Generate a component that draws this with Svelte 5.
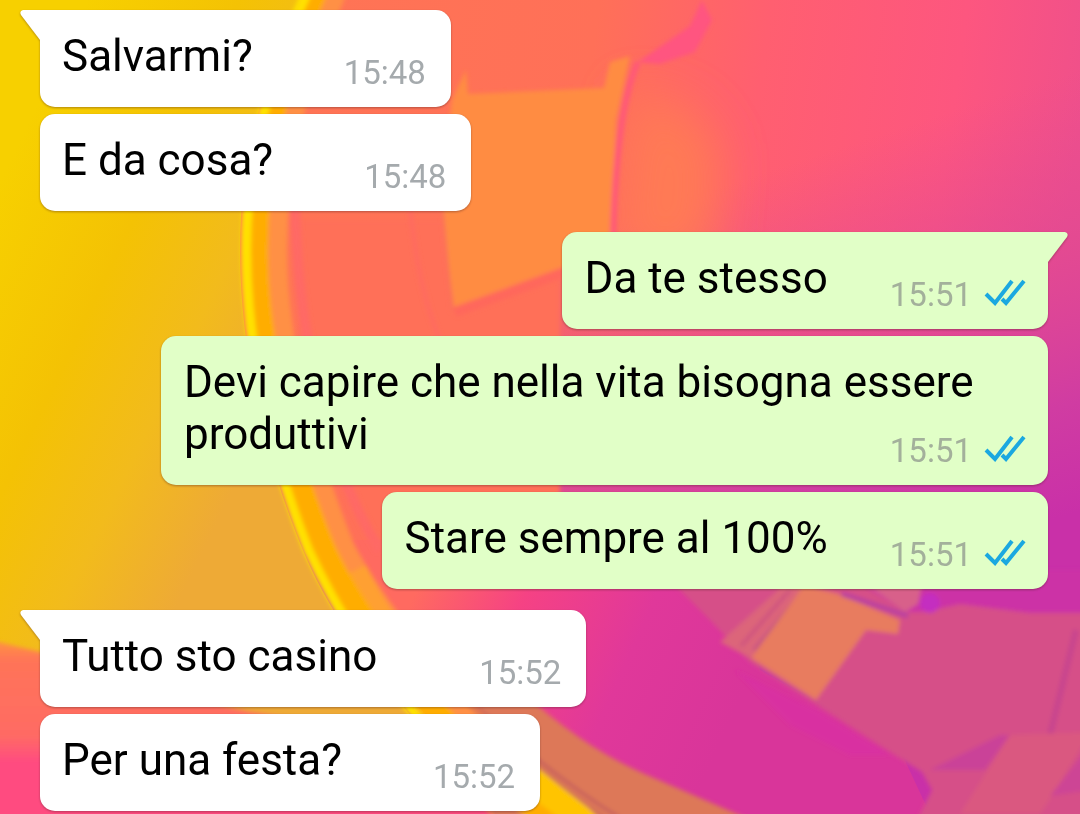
<script>
  const messages = [
    { id: 1, text: 'Salvarmi?', time: '15:48', own: false, first: true },
    { id: 2, text: 'E da cosa?', time: '15:48', own: false },
    { id: 3, text: 'Da te stesso', time: '15:51', own: true, first: true },
    { id: 4, text: 'Devi capire che nella vita bisogna essere produttivi', time: '15:51', own: true },
    { id: 5, text: 'Stare sempre al 100%', time: '15:51', own: true },
    { id: 6, text: 'Tutto sto casino\u00a0', time: '15:52', own: false, first: true },
    { id: 7, text: 'Per una festa?', time: '15:52', own: false },
  ];
</script>

<main class="chat">
  <svg class="wallpaper" viewBox="0 0 1080 814" preserveAspectRatio="none" aria-hidden="true">
    <defs>
      <linearGradient id="warm" gradientUnits="userSpaceOnUse" x1="240" y1="0" x2="1080" y2="120">
        <stop offset="0" stop-color="#ff7554" />
        <stop offset="0.42" stop-color="#ff7058" />
        <stop offset="0.62" stop-color="#ff5f70" />
        <stop offset="0.85" stop-color="#fd567f" />
        <stop offset="1" stop-color="#f0508a" />
      </linearGradient>
      <linearGradient id="dusk" gradientUnits="userSpaceOnUse" x1="800" y1="160" x2="930" y2="560">
        <stop offset="0" stop-color="#e0489a" stop-opacity="0" />
        <stop offset="0.4" stop-color="#dc4696" stop-opacity="0.65" />
        <stop offset="0.75" stop-color="#d03ca2" />
        <stop offset="1" stop-color="#c930a8" />
      </linearGradient>
      <linearGradient id="gold" gradientUnits="userSpaceOnUse" x1="0" y1="180" x2="310" y2="330">
        <stop offset="0" stop-color="#f7d000" />
        <stop offset="0.4" stop-color="#f4c204" />
        <stop offset="0.7" stop-color="#f2bb1c" />
        <stop offset="1" stop-color="#eeaa36" />
      </linearGradient>
      <linearGradient id="corner" gradientUnits="userSpaceOnUse" x1="0" y1="640" x2="0" y2="814">
        <stop offset="0" stop-color="#ff9440" />
        <stop offset="0.12" stop-color="#ff7458" />
        <stop offset="0.55" stop-color="#ff6b64" />
        <stop offset="0.7" stop-color="#ff4c80" />
        <stop offset="1" stop-color="#ff4c80" />
      </linearGradient>
      <linearGradient id="magenta" gradientUnits="userSpaceOnUse" x1="430" y1="560" x2="740" y2="700">
        <stop offset="0" stop-color="#ff6a60" />
        <stop offset="0.3" stop-color="#f54284" />
        <stop offset="0.65" stop-color="#e0389a" />
        <stop offset="1" stop-color="#d9359a" />
      </linearGradient>
      <filter id="soft" x="-10%" y="-10%" width="120%" height="120%">
        <feGaussianBlur stdDeviation="2" />
      </filter>
      <filter id="haze" x="-60%" y="-60%" width="220%" height="220%">
        <feGaussianBlur stdDeviation="24" />
      </filter>
    </defs>

    <rect width="1080" height="814" fill="url(#warm)" />
    <rect width="1080" height="814" fill="url(#dusk)" />

    <!-- upper panels -->
    <path d="M630 90 L690 110 L720 150 L710 260 L612 260 Z" fill="#ff7a54" filter="url(#haze)" />
    <path d="M290 220 L560 220 L560 570 L330 570 Z" fill="#ff7058" filter="url(#soft)" />
    <g filter="url(#soft)">
      <path d="M468 94 L604 88 L610 62 L630 56 L616 120 L610 262 L454 308 L440 200 L452 100 L466 70 Z" fill="#ff8c42" />
      <path d="M702 0 L690 26 L638 62 L660 64 L695 52 L712 20 Z" fill="#ff5480" />
      <path d="M638 62 Q616 110 613 240" fill="none" stroke="#ff5878" stroke-width="6" />
      <path d="M455 312 L570 270" stroke="#ff685c" stroke-width="10" />
      <path d="M410 205 Q418 290 440 340" fill="none" stroke="#ff6a60" stroke-width="4" />
      <path d="M442 205 L452 312" stroke="#f9705a" stroke-width="2" />
    </g>

    <!-- lower field -->
    <path d="M340 540 L720 540 L760 670 L900 750 L930 814 L500 814 Z" fill="url(#magenta)" />
    <g filter="url(#soft)">
      <path d="M660 570 L940 570 L940 596 L1090 596 L1090 824 L915 824 L932 790 L922 772 L890 752 L750 662 L710 620 Z" fill="#d65088" />
      <path d="M720 642 L784 585 L808 585 L750 658 Z" fill="#dc657a" />
      <path d="M754 650 L804 588" stroke="#b84888" stroke-width="2" />
      <path d="M741 646 L790 590" stroke="#cc5080" stroke-width="3" />
      <path d="M804 585 L838 594 L900 620 L898 634 L866 630 L816 700 L751 658 Z" fill="#e87c5e" />
      <path d="M840 570 L1090 570 L1090 613 L1030 613 L960 604 L925 612 L905 612 Z" fill="#cc32a6" />
      <path d="M866 584 L922 584 L918 604 L905 612 Z" fill="#d8608a" />
      <path d="M842 594 L908 616" stroke="#b941a0" stroke-width="5" />
      <circle cx="930" cy="603" r="10" fill="#c42fc0" />
      <path d="M1076 630 L1050 735" stroke="#c8458e" stroke-width="6" />
      <path d="M930 770 L985 770 L1010 735 L1000 735 L960 755 Z" fill="#ca4298" />
      <path d="M1010 735 L1090 732 L1056 790 L1040 814 L960 814 Z" fill="#da5880" />
      <path d="M1090 745 L1050 796 L1090 790 Z" fill="#cd4595" />
      <path d="M735 670 L820 712 L890 755 L850 755 L790 725 Z" fill="#d82ca4" opacity="0.7" />
    </g>

    <!-- golden left side with its bright rim -->
    <path d="M-5 -5 L304 -5 Q240 120 240 250 C240 350 265 460 305 555 Q350 660 480 790 L500 820 L-5 820 Z" fill="url(#gold)" />
    <g fill="none" filter="url(#soft)">
      <path d="M440 640 L520 690 Q580 745 640 772 L760 824 L500 824 L400 700 Z" fill="#dd7858" />
      <path d="M330 -10 Q270 120 270 250 C270 350 302 460 338 550 Q390 650 530 780 L580 830" stroke="#ff9044" stroke-width="34" />
      <path d="M345 575 Q375 640 430 690" stroke="#ffa030" stroke-width="46" />
      <path d="M316 -10 Q256 120 256 250 C256 350 287 460 324 550 Q370 650 500 780 L560 830" stroke="#ffad00" stroke-width="24" />
      <path d="M308 -10 Q246 120 246 250 C246 350 272 460 308 550 Q352 645 420 720" stroke="#ffe100" stroke-width="10" />
      <path d="M520 775 Q560 796 590 830" stroke="#ffc404" stroke-width="28" />
      <path d="M295 205 Q298 300 312 360 Q335 480 380 550" stroke="#ff6965" stroke-width="10" />
      <path d="M475 705 Q550 775 620 818" stroke="#b9505e" stroke-width="2" />
      <path d="M468 704 Q540 772 604 818" stroke="#c4605a" stroke-width="2" />
    </g>
    <path d="M-10 640 L40 652 Q150 690 250 712 L400 735 L510 830 L-10 830 Z" fill="url(#corner)" filter="url(#soft)" />
  </svg>

  <ol class="messages">
    {#each messages as message (message.id)}
      <li class:own={message.own} class:first={message.first}>
        <div class="bubble">
          {#if message.first}
            <svg class="tail" viewBox="0 0 21 31" aria-hidden="true">
              <path d="M21 0 H3 Q-1 1 1 5 L20 30 H21 Z" />
            </svg>
          {/if}
          {message.text}
          <span class="meta">
            <time>{message.time}</time>
            {#if message.own}
              <svg class="ticks" viewBox="0 0 42 28" role="img" aria-label="Letto">
                <path d="M2 16 L11 25 L28 3 M18 21 L22 25 L40 3" />
              </svg>
            {/if}
          </span>
        </div>
      </li>
    {/each}
  </ol>
</main>

<style>
  :global(body) {
    margin: 0;
  }

  .chat {
    position: relative;
    box-sizing: border-box;
    min-height: 100vh;
    padding: 10px 32px 3px 40px;
    overflow: hidden;
    font-family: Roboto, 'Noto Sans', sans-serif;
    font-size: 44px;
    line-height: 52px;
    color: #000;
  }

  .wallpaper {
    position: absolute;
    inset: 0;
    width: 100%;
    height: 100%;
  }

  .messages {
    position: relative;
    display: flex;
    flex-direction: column;
    gap: 7px;
    margin: 0;
    padding: 0;
    list-style: none;
  }

  li {
    display: flex;
  }

  li.own {
    justify-content: flex-end;
  }

  li.first:not(:first-child) {
    margin-top: 14px;
  }

  .bubble {
    position: relative;
    display: flow-root;
    box-sizing: border-box;
    max-width: 88%;
    padding: 20px 25px 14px 22px;
    border-radius: 15px;
    background: #fff;
    filter: drop-shadow(0 1px 1px rgba(70, 30, 30, 0.4));
  }

  .own .bubble {
    padding-right: 22px;
    padding-left: 23px;
    background: #e1ffc7;
  }

  .first .bubble {
    border-top-left-radius: 0;
  }

  .own.first .bubble {
    border-top-left-radius: 15px;
    border-top-right-radius: 0;
  }

  .tail {
    position: absolute;
    top: 0;
    left: -20px;
    width: 21px;
    height: 31px;
    fill: #fff;
  }

  .own .tail {
    left: auto;
    right: -20px;
    fill: #e1ffc7;
    transform: scaleX(-1);
  }

  /* floats into the last line, a little below the text's baseline */
  .meta {
    float: right;
    display: flex;
    align-items: center;
    gap: 12px;
    margin: 23px 0 0 91px;
    font-size: 33px;
    line-height: 40px;
    color: #a5aaad;
  }

  .own .meta {
    margin-left: 62px;
    color: #a3b09b;
  }

  .ticks {
    width: 42px;
    height: 28px;
    margin-bottom: 6px;
    fill: none;
    stroke: #1ba8e0;
    stroke-width: 4;
  }
</style>
